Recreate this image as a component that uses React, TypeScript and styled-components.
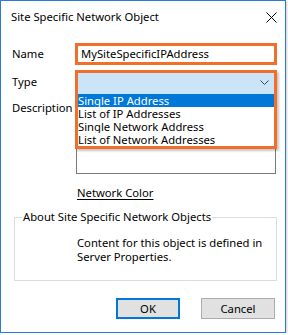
import React from 'react';
import styled, { createGlobalStyle } from 'styled-components';

const GlobalStyle = createGlobalStyle`
  html, body {
    margin: 0;
    padding: 0;
    background: #ffffff;
  }
  body {
    font-family: "Noto Sans", "Open Sans", sans-serif;
    font-size: 11.25px;
    color: #000000;
  }
`;

const typeOptions = [
  'Single IP Address',
  'List of IP Addresses',
  'Single Network Address',
  'List of Network Addresses',
];

const CloseIcon = () => (
  <svg width="11" height="11" viewBox="0 0 11 11">
    <path d="M0.5 0.5 L10.5 10.5 M10.5 0.5 L0.5 10.5" stroke="#000" strokeWidth="1" fill="none" />
  </svg>
);

const Chevron = () => (
  <svg width="9" height="5" viewBox="0 0 9 5">
    <path d="M0.5 0.5 L4.5 4.5 L8.5 0.5" stroke="#444" strokeWidth="1" fill="none" />
  </svg>
);

export default function App() {
  return (
    <>
      <GlobalStyle />
      <Window>
        <TitleBar>
          <Title>Site Specific Network Object</Title>
          <CloseButton>
            <CloseIcon />
          </CloseButton>
        </TitleBar>
        <Content>
          <FormGrid>
            <Label>Name</Label>
            <Highlight>
              <TextInput>MySiteSpecificIPAddress</TextInput>
            </Highlight>

            <Label>Type</Label>
            <TypeField>
              <Popup>
                <SelectBar>
                  <Chevron />
                </SelectBar>
                <OptionList>
                  {typeOptions.map((opt, i) => (
                    <Option key={opt} $selected={i === 0}>
                      {opt}
                    </Option>
                  ))}
                </OptionList>
              </Popup>
            </TypeField>

            <DescLabel>Description</DescLabel>
            <TextArea />

            <span />
            <LinkText>Network Color</LinkText>
          </FormGrid>

          <GroupBox>
            <Legend>About Site Specific Network Objects</Legend>
            <GroupText>
              Content for this object is defined in
              <br />
              Server Properties.
            </GroupText>
          </GroupBox>

          <ButtonRow>
            <Button $primary $width={64}>OK</Button>
            <Button $width={74}>Cancel</Button>
          </ButtonRow>
        </Content>
      </Window>
    </>
  );
}

const Window = styled.div`
  width: 284px;
  height: 331px;
  border: 1px solid #2b7bd3;
  background: #ffffff;
  display: flex;
  flex-direction: column;
  box-shadow: 1px 1px 2px rgba(0, 0, 0, 0.2);
`;

const TitleBar = styled.div`
  height: 30px;
  display: flex;
  align-items: center;
  justify-content: space-between;
  padding: 0 8px 0 10px;
`;

const Title = styled.span`
  line-height: 16px;
  padding-top: 1px;
`;

const CloseButton = styled.div`
  width: 11px;
  height: 11px;
  display: flex;
  margin-top: 2px;
`;

const Content = styled.div`
  display: flex;
  flex-direction: column;
  padding: 12px 7px 0 11px;
`;

const FormGrid = styled.div`
  display: grid;
  grid-template-columns: 63px 202px;
  grid-template-rows: 22px 24px 75px auto;
  row-gap: 5px;
  align-items: center;
`;

const Label = styled.span`
  line-height: 16px;
`;

const DescLabel = styled(Label)`
  align-self: start;
  padding-top: 1px;
`;

const Highlight = styled.div`
  height: 22px;
  box-sizing: border-box;
  border: 3px solid #f0702a;
  display: flex;
  align-items: center;
`;

const TextInput = styled.div`
  flex: 1;
  height: 16px;
  line-height: 16px;
  padding-left: 3px;
  background: #ffffff;
`;

const TypeField = styled.div`
  position: relative;
  height: 24px;
  z-index: 2;
`;

const Popup = styled.div`
  position: absolute;
  top: 0;
  left: 0;
  right: 0;
  border: 3px solid #f0702a;
  background: #ffffff;
  box-shadow: 2px 2px 2px rgba(0, 0, 0, 0.22);
`;

const SelectBar = styled.div`
  height: 21px;
  box-sizing: border-box;
  background: #cce4f7;
  display: flex;
  justify-content: flex-end;
  align-items: flex-start;
  padding: 7px 5px 0 0;
`;

const OptionList = styled.div`
  display: flex;
  flex-direction: column;
`;

const Option = styled.div<{ $selected?: boolean }>`
  height: 13px;
  line-height: 13px;
  white-space: nowrap;
  background: ${({ $selected }) => ($selected ? '#0078d7' : '#ffffff')};
  color: ${({ $selected }) => ($selected ? '#ffffff' : '#000000')};
`;

const TextArea = styled.div`
  height: 75px;
  margin: 0 1px;
  box-sizing: border-box;
  border: 1px solid #7a7a7a;
  background: #ffffff;
`;

const LinkText = styled.span`
  margin-top: 6px;
  padding-left: 2px;
  line-height: 16px;
  text-decoration: underline;
  text-underline-offset: 2px;
`;

const GroupBox = styled.fieldset`
  margin: 9px 1px 0 2px;
  padding: 0 0 16px 0;
  border: 1px solid #dcdcdc;
  min-width: 0;
`;

const Legend = styled.legend`
  margin-left: 7px;
  padding: 0 1px;
  line-height: 14px;
`;

const GroupText = styled.div`
  padding: 12px 0 0 62px;
  line-height: 14px;
`;

const ButtonRow = styled.div`
  display: flex;
  justify-content: flex-end;
  gap: 21px;
  margin-top: 17px;
  padding-right: 3px;
`;

const Button = styled.div<{ $primary?: boolean; $width: number }>`
  width: ${({ $width }) => $width}px;
  height: 21px;
  box-sizing: border-box;
  background: #e1e1e1;
  border: ${({ $primary }) => ($primary ? '2px solid #0078d7' : '1px solid #adadad')};
  display: flex;
  align-items: center;
  justify-content: center;
  line-height: 16px;
`;
